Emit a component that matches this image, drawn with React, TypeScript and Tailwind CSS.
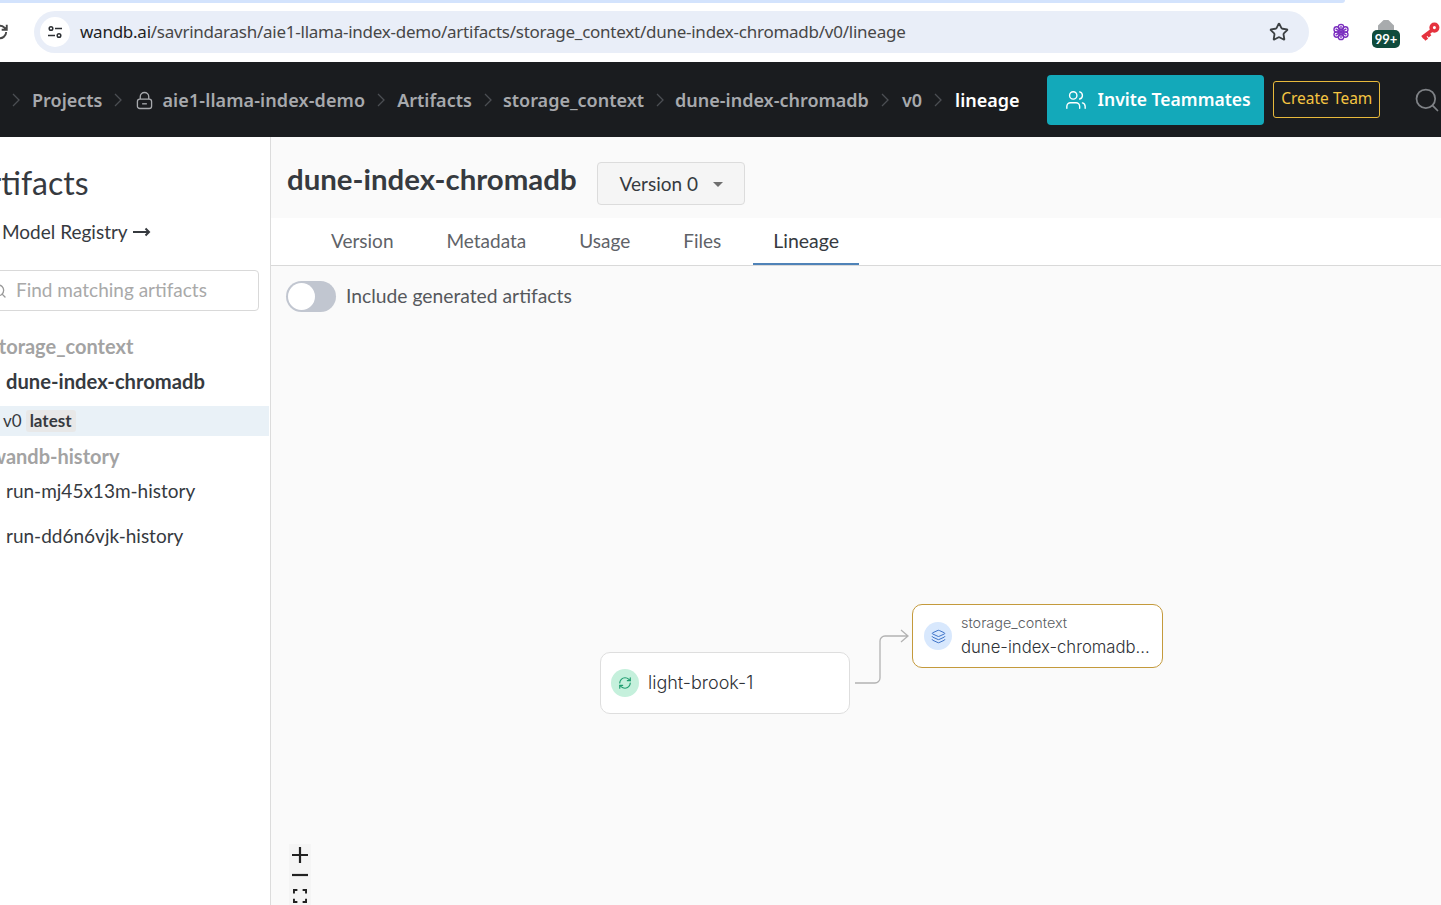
import React from 'react';
import { RefreshCw, Layers, Search, Star, Users } from 'lucide-react';

const crumbs = [
  { label: 'storage_context', cls: '-ml-[1px]' },
  { label: 'dune-index-chromadb', cls: '-ml-[1px]' },
  { label: 'v0', cls: 'ml-[1px]' },
];
const tabs = ['Version', 'Metadata', 'Usage', 'Files'];
const petals = [
  [10, 4.5],
  [14.8, 7.2],
  [14.8, 12.8],
  [10, 15.5],
  [5.2, 12.8],
  [5.2, 7.2],
];
const sans = "font-['Noto_Sans',sans-serif]";

const Sep = () => (
  <svg viewBox="0 0 14 14" className="w-[14px] h-[14px] shrink-0" fill="none" stroke="#4b4e53" strokeWidth="1.3">
    <path d="M4 1l6 6-6 6" />
  </svg>
);

const App: React.FC = () => {
  return (
    <div className="w-[1441px] h-[905px] overflow-hidden flex flex-col bg-white font-['Lato',sans-serif] text-[#363a3f]">
      {/* Browser chrome */}
      <div className="h-[62px] shrink-0 relative">
        <div className="absolute left-0 top-0 w-[1345px] h-[3px] bg-[#d3e3fd] rounded-br-lg" />
        <div className="flex items-center h-full pt-[1px]">
          <svg viewBox="0 0 16 16" className="w-[18px] h-[18px] -ml-[9px] shrink-0" fill="none" stroke="#474747" strokeWidth="1.7">
            <path d="M13.5 8a5.5 5.5 0 1 1-1.7-4L14 6M14 1.5V6H9.5" />
          </svg>
          <div className="ml-[25px] w-[1276px] h-[42px] rounded-full bg-[#e9eef8] flex items-center pl-[6px] pr-5">
            <div className="w-[30px] h-[30px] rounded-full bg-white flex items-center justify-center shrink-0">
              <svg viewBox="0 0 16 16" className="w-4 h-4" fill="none" stroke="#2c2f33" strokeWidth="1.5">
                <circle cx="4" cy="4.5" r="1.8" />
                <path d="M8 4.5h7M1 11.5h7" />
                <circle cx="12" cy="11.5" r="1.8" />
              </svg>
            </div>
            <span className={`ml-[10px] mt-[1px] text-[17px] text-[#1f1f1f] whitespace-nowrap tracking-[-0.25px] ${sans}`}>
              wandb.ai<span className="text-[#474747]">/savrindarash/aie1-llama-index-demo/artifacts/storage_context/dune-index-chromadb/v0/lineage</span>
            </span>
            <Star className="ml-auto w-[20px] h-[20px] text-[#3c4043]" strokeWidth={2.2} />
          </div>
          {/* Extension icons */}
          <svg viewBox="0 0 20 20" className="ml-[23px] w-[18px] h-[18px] shrink-0" fill="none" stroke="#7b2fbf" strokeWidth="1.5">
            {petals.map(([cx, cy]) => (
              <circle key={`${cx}-${cy}`} cx={cx} cy={cy} r="3" />
            ))}
            <path d="M10 3v14M4 6.500l12 7M4 13.500l12-7" />
          </svg>
          <div className="ml-[22px] w-[28px] relative h-[30px] shrink-0 mt-[9px]">
            <div className="absolute left-[6px] -top-[1px] w-[16px] h-[10px] bg-[#a8abad] [clip-path:polygon(35%_0,65%_0,100%_55%,100%_100%,0_100%,0_55%)]" />
            <div className="absolute left-0 top-[9px] w-[28px] h-[18px] rounded-[5px] bg-[#0f4b3c] text-white text-[13px] font-bold text-center leading-[19px]">
              99+
            </div>
          </div>
          <svg viewBox="0 0 20 20" className="ml-[19px] w-[22px] h-[22px] shrink-0" fill="none" stroke="#e5323e" strokeWidth="3.2">
            <circle cx="14" cy="6" r="3" />
            <path d="M11.500 8.500 3 15M5 14l2 3M8 11.500l2 2.500" />
          </svg>
        </div>
      </div>

      {/* Top nav */}
      <div className="h-[75px] shrink-0 bg-[#1a1c1f] flex items-center pl-[9px] whitespace-nowrap">
        <div className={`flex items-center gap-[9px] pt-[1px] text-[18px] font-semibold text-[#a7a9ad] ${sans}`}>
          <Sep />
          <span>Projects</span>
          <Sep />
          <svg viewBox="0 0 18 20" className="w-[17px] h-[19px] ml-[2px] shrink-0" fill="none" stroke="currentColor" strokeWidth="1.4">
            <path d="M4.500 8.500V6a4.500 4.500 0 0 1 9 0v2.500" />
            <rect x="1.500" y="8.500" width="15" height="10" rx="2.500" />
            <path d="M6.500 13.500h5" />
          </svg>
          <span className="tracking-[0.1px]">aie1-llama-index-demo</span>
          <Sep />
          <span>Artifacts</span>
          {crumbs.map(c => (
            <React.Fragment key={c.label}>
              <Sep />
              <span className={c.cls}>{c.label}</span>
            </React.Fragment>
          ))}
          <Sep />
          <span className="text-white ml-[1px]">lineage</span>
        </div>
        <button className={`ml-[27px] w-[218px] h-[50px] rounded-[4px] bg-[#13a9ba] text-white text-[17.5px] font-semibold flex items-center pl-[18px] ${sans}`}>
          <Users className="w-[22px] h-[22px] mr-[11px]" strokeWidth={1.5} />
          Invite Teammates
        </button>
        <button className={`ml-[9px] w-[108px] h-[37px] rounded-[3px] border border-[#e8b93c] text-[#f5c542] text-[15.5px] pb-[1px] pl-[1px] ${sans}`}>
          Create Team
        </button>
        <Search className="ml-[33px] w-[28px] h-[28px] text-[#7f8286] shrink-0" strokeWidth={1.5} />
      </div>

      <div className="flex flex-1 min-h-0">
        {/* Sidebar */}
        <div className="w-[271px] shrink-0 border-r border-[#dcdcdc] flex flex-col">
          <h1 className="mt-[24px] text-[32px] leading-[44px] -ml-[32px] whitespace-nowrap">Artifacts</h1>
          <div className="mt-[14px] h-[26px] flex items-center text-[19px] -ml-[7px] whitespace-nowrap">
            <span className="ml-[9px]">Model Registry</span>
            <svg viewBox="0 0 18 12" className="ml-[5px] w-[18px] h-[12px]" fill="none" stroke="currentColor" strokeWidth="2">
              <path d="M0 6h16M12.500 2.500 16 6l-3.500 3.500" />
            </svg>
          </div>
          <div className="mt-[25px] -ml-[10px] w-[269px] h-[41px] rounded-[4px] border border-[#d9d9d9] flex items-center shrink-0">
            <Search className="w-[16px] h-[16px] text-[#9a9a9a] shrink-0" strokeWidth={2} />
            <span className="ml-[9px] text-[19px] text-[#a9a9a9]">Find matching artifacts</span>
          </div>
          <div className="mt-[22px] -ml-[10px] text-[20px] font-bold text-[#a3a3a3] leading-[26px] whitespace-nowrap">storage_context</div>
          <div className="mt-[9px] ml-[6px] text-[20.2px] font-bold leading-[26px] whitespace-nowrap">dune-index-chromadb</div>
          <div className="mt-[12px] mr-[1px] h-[30px] bg-[#e9f1f7] flex items-center pl-[3px] text-[17px]">
            <span>v0</span>
            <span className="ml-[4px] px-[4px] rounded-[3px] bg-[#e8e8e8] font-bold leading-[22px]">latest</span>
          </div>
          <div className="mt-[7px] -ml-[10px] text-[20px] font-bold text-[#a3a3a3] leading-[26px] whitespace-nowrap">wandb-history</div>
          <div className="mt-[9px] ml-[6px] text-[19px] leading-[26px]">run-mj45x13m-history</div>
          <div className="mt-[19px] ml-[6px] text-[19px] leading-[26px]">run-dd6n6vjk-history</div>
        </div>

        {/* Main */}
        <div className="flex-1 min-w-0 flex flex-col bg-[#fafafa]">
          <div className="h-[81px] shrink-0 flex items-start pl-[16px] pt-[25px]">
            <h2 className="text-[29.4px] leading-[36px] -mt-[1px] font-bold whitespace-nowrap">dune-index-chromadb</h2>
            <button className="ml-[20px] shrink-0 w-[148px] h-[43px] rounded-[4px] border border-[#dcdcdc] bg-[#f5f5f5] flex items-center pl-[22px] pt-[1px] text-[19px]">
              Version 0
              <span className="ml-[15px] w-0 h-0 border-x-[5px] border-x-transparent border-t-[5px] border-t-[#6f6f6f]" />
            </button>
          </div>
          <div className="h-[48px] shrink-0 bg-white border-b border-[#d9d9d9] flex pl-[40px] text-[19px] text-[#5f6368]">
            {tabs.map(t => (
              <div key={t} className="h-[47px] px-[20px] mr-[13px] flex items-center">{t}</div>
            ))}
            <div className="h-[47px] px-[20px] -ml-[1px] flex items-center pt-[1px] text-[19.5px] text-[#363a3f] border-b-2 border-[#4f83b8]">Lineage</div>
          </div>
          <div className="flex-1 relative">
            <div className="flex items-center pl-[15px] pt-[15px]">
              <div className="w-[50px] h-[31px] rounded-full bg-[#c1c6d0] p-[2px]">
                <div className="w-[27px] h-[27px] rounded-full bg-white" />
              </div>
              <span className="ml-[10px] text-[19.3px] text-[#55585c]">Include generated artifacts</span>
            </div>

            {/* Lineage canvas */}
            <div className="absolute left-[329px] top-[386px] w-[250px] h-[62px] rounded-[10px] bg-white border border-[#dedede] flex items-center pl-[10px]">
              <div className="w-[28px] h-[28px] rounded-full bg-[#c5f0dc] flex items-center justify-center">
                <RefreshCw className="w-[14px] h-[14px] text-[#1f9d6f]" strokeWidth={2} />
              </div>
              <span className="ml-[9px] pb-[1px] text-[18px] text-[#2f3237] font-['Inter',sans-serif] font-light">light-brook-1</span>
            </div>
            <svg className="absolute left-[580px] top-[360px]" width="60" height="60" viewBox="0 0 60 60" fill="none" stroke="#b3b3b3" strokeWidth="1.3">
              <path d="M4 57h20a5 5 0 0 0 5-5V15a5 5 0 0 1 5-5h22M50 4l7 6-7 6" />
            </svg>
            <div className="absolute left-[641px] top-[338px] w-[251px] h-[64px] rounded-[10px] bg-white border border-[#c49a3c] flex items-center pl-[11px]">
              <div className="w-[28px] h-[28px] rounded-full bg-[#d8e8fd] flex items-center justify-center shrink-0">
                <Layers className="w-[15px] h-[15px] text-[#3f74c9]" strokeWidth={1.6} />
              </div>
              <div className="ml-[9px] min-w-0 font-['Inter',sans-serif] font-light">
                <div className="text-[14.4px] leading-[20px] text-[#5a5d62]">storage_context</div>
                <div className="text-[16.7px] leading-[26px] pt-[1px] text-[#2f3237] whitespace-nowrap">dune-index-chromadb...</div>
              </div>
            </div>

            {/* Zoom controls */}
            <div className="absolute left-[18px] top-[578px] w-[22px] bg-[#f5f5f5] flex flex-col items-center">
              <div className="h-[22px] flex items-center justify-center text-[#222]">
                <svg viewBox="0 0 16 16" className="w-4 h-4" stroke="currentColor" strokeWidth="2.2"><path d="M8 0v16M0 8h16" /></svg>
              </div>
              <div className="h-[18px] flex items-center justify-center text-[#222]">
                <svg viewBox="0 0 16 16" className="w-4 h-4" stroke="currentColor" strokeWidth="2.2"><path d="M0 8h16" /></svg>
              </div>
              <div className="h-[24px] flex items-center justify-center text-[#222]">
                <svg viewBox="0 0 16 16" className="w-[14px] h-[14px]" fill="none" stroke="currentColor" strokeWidth="2.4"><path d="M1 5V1h4M11 1h4v4M15 11v4h-4M5 15H1v-4" /></svg>
              </div>
            </div>
          </div>
        </div>
      </div>
    </div>
  );
};

export default App;
